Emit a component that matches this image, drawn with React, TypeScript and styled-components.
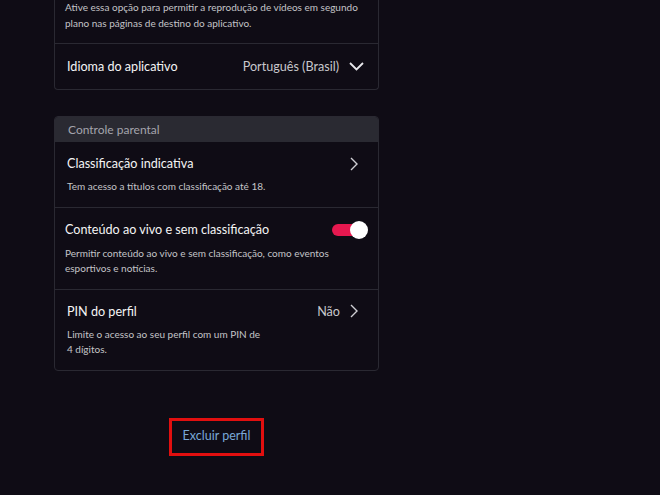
import styled, { createGlobalStyle } from 'styled-components';

const Global = createGlobalStyle`
  html, body {
    margin: 0;
    background: #0f0c15;
  }
  body {
    font-family: Lato, "Noto Sans", sans-serif;
    color: #f2f2f2;
  }
`;

const Page = styled.div`
  width: 660px;
  height: 495px;
  overflow: hidden;
  padding-left: 54px;
  box-sizing: border-box;
`;

const Column = styled.div`
  width: 325px;
  display: flex;
  flex-direction: column;
`;

const Card = styled.div<{ $cut?: boolean }>`
  border: 1px solid #2a2932;
  border-top: ${p => (p.$cut ? 'none' : '1px solid #2a2932')};
  border-radius: ${p => (p.$cut ? '0 0 4px 4px' : '4px')};
  background: #0f0c15;
  overflow: hidden;
`;

const Header = styled.div`
  background: #2a2a32;
  height: 25px;
  display: flex;
  align-items: center;
  padding-left: 13px;
  font-size: 12px;
  color: #a4a4ac;
`;

const Row = styled.div<{ $pt?: number; $pb?: number }>`
  padding: ${p => p.$pt ?? 13}px 14px ${p => p.$pb ?? 12}px 12px;
  & + & {
    border-top: 1px solid #2a2932;
  }
`;

const Line = styled.div`
  display: flex;
  align-items: center;
  justify-content: space-between;
  min-height: 17px;
`;

const Title = styled.div`
  font-size: 12.6px;
  color: #f4f4f4;
`;

const Desc = styled.div<{ $width?: number }>`
  font-size: 10px;
  line-height: 15.5px;
  color: #c4c4c8;
  margin-top: ${p => (p.$width === undefined ? 0 : 7)}px;
  max-width: ${p => p.$width ?? 300}px;
`;

const Value = styled.div`
  display: flex;
  align-items: center;
  gap: 10px;
  font-size: 12.6px;
  color: #c8c8cc;
`;

const Toggle = styled.div`
  position: relative;
  width: 36px;
  height: 18px;
  margin-right: -4px;
  display: flex;
  align-items: center;
`;

const Track = styled.div`
  width: 32px;
  height: 12px;
  border-radius: 6px;
  background: #e6184f;
`;

const Knob = styled.div`
  position: absolute;
  right: 0;
  top: 0;
  width: 18px;
  height: 18px;
  border-radius: 50%;
  background: #ffffff;
`;

const DeleteWrap = styled.div`
  display: flex;
  justify-content: center;
  margin-top: 47px;
`;

const DeleteBox = styled.div`
  border: 3px solid #e10f0f;
  padding: 7px 11px 10px 11px;
  font-size: 12.5px;
  color: #79a8d8;
`;

const RightArrow = styled.svg`
  margin-right: 6px;
`;

const Chevron = ({ down }: { down?: boolean }) =>
  down ? (
    <svg width="15" height="9" viewBox="0 0 15 9" fill="none">
      <path d="M1 1l6.5 6.5L14 1" stroke="#e8e8ec" strokeWidth="1.8" />
    </svg>
  ) : (
    <RightArrow width="8" height="14" viewBox="0 0 8 14" fill="none">
      <path d="M1 1l6 6-6 6" stroke="#cfcfd4" strokeWidth="1.4" />
    </RightArrow>
  );

export default function App() {
  return (
    <Page>
      <Global />
      <Column>
        <Card $cut>
          <Row $pt={0} $pb={12} style={{ paddingLeft: 10 }}>
            <Desc>
              Ative essa opção para permitir a reprodução de vídeos em segundo plano nas páginas de destino do aplicativo.
            </Desc>
          </Row>
          <Row $pt={14} $pb={14}>
            <Line>
              <Title>Idioma do aplicativo</Title>
              <Value>
                Português (Brasil)
                <Chevron down />
              </Value>
            </Line>
          </Row>
        </Card>
        <div style={{ height: 26 }} />
        <Card>
          <Header>Controle parental</Header>
          <Row>
            <Line>
              <Title>Classificação indicativa</Title>
              <Value>
                <Chevron />
              </Value>
            </Line>
            <Desc $width={300}>Tem acesso a títulos com classificação até 18.</Desc>
          </Row>
          <Row style={{ paddingLeft: 10 }}>
            <Line>
              <Title>Conteúdo ao vivo e sem classificação</Title>
              <Toggle>
                <Track />
                <Knob />
              </Toggle>
            </Line>
            <Desc $width={270}>
              Permitir conteúdo ao vivo e sem classificação, como eventos esportivos e notícias.
            </Desc>
          </Row>
          <Row>
            <Line>
              <Title>PIN do perfil</Title>
              <Value>
                Não
                <Chevron />
              </Value>
            </Line>
            <Desc $width={200}>Limite o acesso ao seu perfil com um PIN de 4 dígitos.</Desc>
          </Row>
        </Card>
        <DeleteWrap>
          <DeleteBox>Excluir perfil</DeleteBox>
        </DeleteWrap>
      </Column>
    </Page>
  );
}
